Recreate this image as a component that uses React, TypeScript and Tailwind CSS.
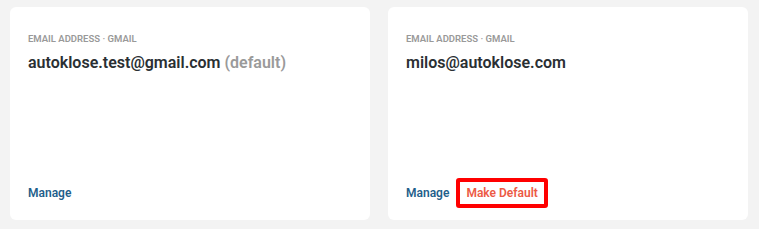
import React from "react";

function Card({ email, isDefault }: { email: string; isDefault?: boolean }) {
  return (
    <div className="flex-1 h-[213px] bg-white rounded-[6px] flex flex-col justify-between pl-[18px] pr-4 pt-[25px] pb-[12px]">
      <div>
        <div className="text-[9.5px] leading-[14px] font-semibold uppercase text-[#999999]">
          Email Address · Gmail
        </div>
        <div className="mt-[6px] text-[16px] leading-[22px] font-semibold text-[#2a2f33]">
          {email}
          {isDefault && <span className="text-[#9a9a9a]"> (default)</span>}
        </div>
      </div>
      <div className="flex items-center h-[30px] gap-[7px] text-[12px] font-semibold">
        <span className="text-[#1f5f8b]">Manage</span>
        {!isDefault && (
          <span className="h-[30px] flex items-center border-4 border-[#ff0000] rounded-[3px] pl-[6px] pr-[6px] text-[#ec5a45]">
            Make Default
          </span>
        )}
      </div>
    </div>
  );
}

export default function App() {
  return (
    <div
      className="w-[759px] h-[229px] bg-[#f3f3f3] flex gap-[18px] pl-[10px] pr-[11px] pt-[7px]"
      style={{ fontFamily: "Roboto, 'Liberation Sans', sans-serif" }}
    >
      <Card email="autoklose.test@gmail.com" isDefault />
      <Card email="milos@autoklose.com" />
    </div>
  );
}
